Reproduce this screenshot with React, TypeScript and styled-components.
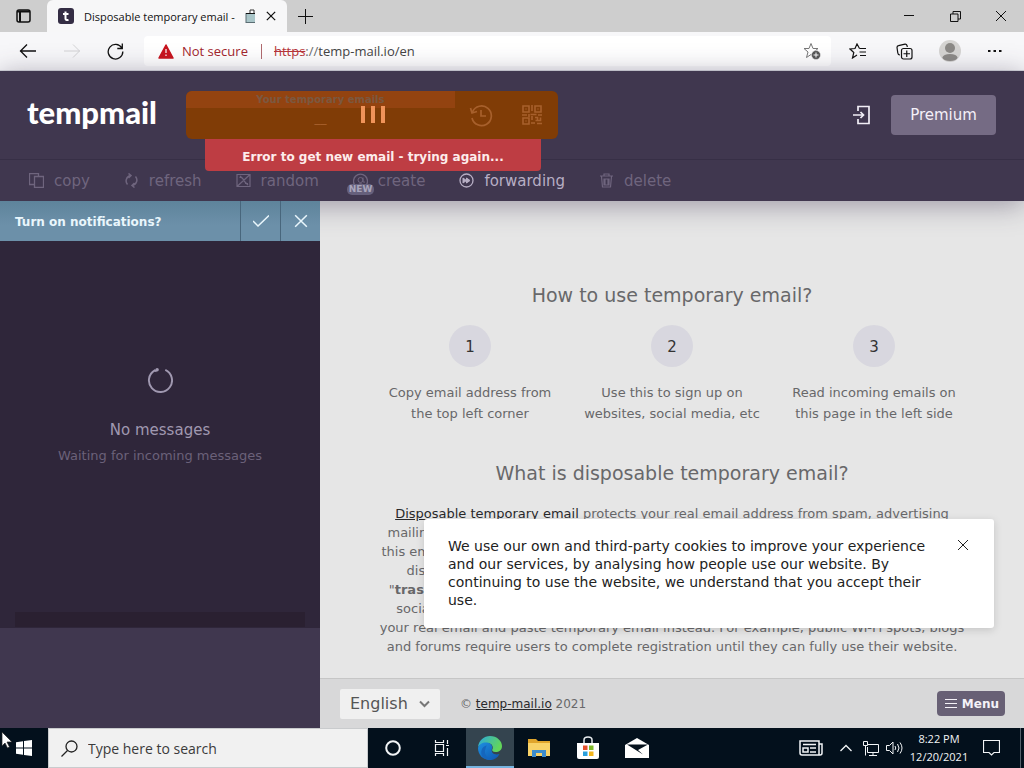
import React from "react";
import styled, { createGlobalStyle, css } from "styled-components";

const Global = createGlobalStyle`
  *, *::before, *::after { box-sizing: border-box; }
  body { margin: 0; font-family: "DejaVu Sans", Verdana, sans-serif; }
  button { font: inherit; color: inherit; background: none; border: 0; padding: 0; margin: 0; }
  svg { display: block; flex: none; }
  h2, p, ol { margin: 0; padding: 0; }
`;

const uiFont = css`
  font-family: "Open Sans", "Segoe UI", sans-serif;
`;

const Desktop = styled.div`
  display: flex;
  flex-direction: column;
  min-height: 100vh;
`;

/* Browser chrome */

const TabStrip = styled.div`
  ${uiFont}
  display: flex;
  align-items: stretch;
  height: 32px;
  background: #cecece;
  color: #111;
`;

const StripButton = styled.button<{ $w: number; $dim?: boolean }>`
  display: flex;
  align-items: center;
  justify-content: center;
  width: ${(p) => p.$w}px;
  color: ${(p) => (p.$dim ? "#d2d2d4" : "#111")};
`;

const Tab = styled.div`
  display: flex;
  align-items: center;
  gap: 10px;
  width: 240px;
  padding: 0 10px 0 11px;
  border-radius: 6px 6px 0 0;
  background: #f7f7f8;
  font-size: 11px;
  white-space: nowrap;
`;

const TabTitle = styled.span`
  display: flex;
  align-items: center;
  gap: 10px;
  flex: 1;
  overflow: hidden;
`;

const Spacer = styled.div`
  flex: 1;
`;

const Toolbar = styled.div`
  ${uiFont}
  display: flex;
  align-items: center;
  height: 39px;
  padding: 0 7px 0 5px;
  background: #f7f7f9;
  border-bottom: 1px solid #d6d8de;
`;

const AddressBar = styled.div`
  display: flex;
  align-items: center;
  flex: 1;
  height: 30px;
  margin: 0 4px 0 7px;
  padding: 0 10px 0 14px;
  border-radius: 4px;
  background: #fff;
  font-size: 13px;
  color: #6b6b6b;
`;

const Insecure = styled.span`
  display: flex;
  align-items: center;
  gap: 8px;
  padding-right: 13px;
  margin-right: 12px;
  border-right: 1px solid #b06a6e;
  line-height: 15px;
  color: #a3262c;
`;

const Scheme = styled.s`
  color: #b8353a;
`;

const AddressInput = styled.input`
  flex: 1;
  min-width: 0;
  padding: 0;
  border: 0;
  outline: 0;
  background: none;
  font: inherit;
  color: #444;
`;

/* Site header */

const Site = styled.div`
  position: relative;
  display: flex;
  flex-direction: column;
  flex: 1;
`;

const Header = styled.header`
  position: relative;
  z-index: 1;
  background: #40374f;
  box-shadow: 0 4px 26px rgba(64, 55, 84, 0.45);
`;

const HeaderTop = styled.div`
  display: flex;
  align-items: center;
  height: 88px;
  padding: 0 28px 0 27px;
`;

const Logo = styled.a`
  width: 159px;
  padding-bottom: 6px;
  font: 900 31px/36px Lato, sans-serif;
  color: #fff;
  text-decoration: none;
`;

const MailBox = styled.div`
  position: relative;
  display: flex;
  width: 372px;
  height: 48px;
  border-radius: 6px;
  background: #803c06;
  color: #a7602c;
`;

const MailAddress = styled.div`
  width: 271px;
  font-size: 12px;
  line-height: 20px;
  text-align: center;
`;

const MailLabel = styled.div`
  height: 17px;
  overflow: hidden;
  border-radius: 6px 0 0 0;
  background: #934310;
  color: #7b5840;
  font-size: 10px;
  font-weight: bold;
  line-height: 18px;
`;

const MailButton = styled.button`
  display: flex;
  align-items: center;
  justify-content: center;
  width: 52px;
`;

const Loader = styled.div`
  position: absolute;
  top: 15px;
  left: 50%;
  display: flex;
  gap: 6px;
  margin-left: -11px;
`;

const LoaderBar = styled.i`
  width: 4px;
  height: 17px;
  background: #f0935a;
`;

const Toast = styled.div`
  position: absolute;
  top: 48px;
  left: 19px;
  right: 17px;
  height: 32px;
  border-radius: 0 0 4px 4px;
  background: #be3d43;
  color: #fdeceb;
  font-size: 12px;
  font-weight: bold;
  line-height: 36px;
  text-align: center;
`;

const Login = styled.button`
  margin-right: 20px;
  color: #f1eef6;
`;

const Premium = styled.button`
  width: 105px;
  height: 40px;
  border-radius: 4px;
  background: #756b84;
  color: #f4f0f8;
  font-size: 15px;
`;

const Actions = styled.nav`
  display: flex;
  height: 42px;
  padding: 0 12px;
  border-top: 1px solid #372f46;
`;

const Action = styled.button<{ $on?: boolean }>`
  position: relative;
  display: flex;
  align-items: center;
  gap: 10px;
  padding: 0 17px;
  font-size: 15px;
  color: ${(p) => (p.$on ? "#b7aec4" : "#6f657e")};
`;

const Badge = styled.span`
  position: absolute;
  left: 11px;
  top: 24px;
  padding: 0 2px;
  border-radius: 5px;
  background: #66607c;
  color: #a9a5bb;
  font-size: 9px;
  font-weight: bold;
  line-height: 11px;
`;

/* Site body */

const Body = styled.div`
  display: flex;
  flex: 1;
`;

const Sidebar = styled.aside`
  position: relative;
  z-index: 2;
  display: flex;
  flex-direction: column;
  width: 320px;
  background: #40374f;
`;

const Notify = styled.div`
  display: flex;
  align-items: stretch;
  height: 40px;
  padding-left: 15px;
  background: linear-gradient(#5e849b, #6c90a9 60%);
  color: #e9f6fc;
  font-size: 12px;
  font-weight: bold;
  line-height: 42px;
`;

const NotifyButton = styled.button`
  display: flex;
  align-items: center;
  justify-content: center;
  width: 40px;
  border-left: 1px solid #48667c;
`;

const Inbox = styled.section`
  display: flex;
  flex-direction: column;
  align-items: center;
  height: 387px;
  padding-top: 126px;
  background: #2f263a;
  color: #a098b0;
  font-size: 15px;
  line-height: 26px;
`;

const InboxTitle = styled.p`
  margin-top: 24px;
`;

const InboxHint = styled.p`
  color: #6b6179;
  font-size: 13px;
`;

const InboxShade = styled.div`
  width: 290px;
  height: 15px;
  margin: auto 0 1px;
  background: #2a2031;
`;

const Main = styled.main`
  display: flex;
  flex-direction: column;
  flex: 1;
  background: #e6e6e6;
  color: #68686a;
  text-align: center;
`;

const Content = styled.div`
  width: 606px;
  max-width: 100%;
  margin: 0 auto;
  padding: 80px 0 20px;
  flex: 1;
`;

const Title = styled.h2`
  font-size: 19px;
  font-weight: normal;
  line-height: 28px;
`;

const Steps = styled.ol`
  display: grid;
  grid-template-columns: repeat(3, 1fr);
  padding: 16px 0 35px;
  list-style: none;
  font-size: 13px;
  line-height: 21px;
`;

const Step = styled.li`
  display: flex;
  flex-direction: column;
  align-items: center;
  gap: 15px;
`;

const StepNumber = styled.span`
  width: 42px;
  height: 42px;
  border-radius: 50%;
  background: #d8d7df;
  color: #333;
  font-size: 15px;
  line-height: 44px;
`;

const About = styled.p`
  padding-top: 17px;
  font-size: 13px;
  line-height: 19px;
  white-space: nowrap;
`;

const TextLink = styled.a`
  color: #29292b;
`;

const Footer = styled.footer`
  display: flex;
  align-items: center;
  height: 50px;
  padding: 0 19px 0 20px;
  border-top: 1px solid #c6c6c6;
  background: #d8d8d9;
  font-size: 12px;
`;

const LanguageWrap = styled.label`
  position: relative;
  display: flex;
  align-items: center;
  margin-right: 20px;
`;

const Language = styled.select`
  appearance: none;
  width: 100px;
  height: 30px;
  padding: 0 10px;
  border: 0;
  border-radius: 2px;
  background: #f0f0f0;
  color: #555;
  font: 16px "DejaVu Sans", sans-serif;
`;

const LanguageArrow = styled.svg`
  position: absolute;
  right: 10px;
  pointer-events: none;
`;

const MenuButton = styled.button`
  display: flex;
  align-items: center;
  gap: 5px;
  height: 25px;
  padding: 0 6px 0 8px;
  border-radius: 4px;
  background: #686075;
  color: #f5f2f8;
  font-size: 12px;
  font-weight: bold;
`;

const Cookie = styled.div`
  position: absolute;
  right: 30px;
  bottom: 100px;
  z-index: 3;
  display: flex;
  align-items: flex-start;
  justify-content: space-between;
  width: 570px;
  height: 109px;
  padding: 18px 24px;
  border-radius: 3px;
  background: #fff;
  box-shadow: 0 2px 8px rgba(0, 0, 0, 0.15);
  color: #222;
  font-size: 14px;
  line-height: 18px;
`;

const CookieText = styled.p`
  width: 484px;
`;

const CookieClose = styled.button`
  padding: 2px 1px;
`;

/* Taskbar */

const Taskbar = styled.footer`
  ${uiFont}
  display: flex;
  align-items: stretch;
  height: 40px;
  background: #03101c;
  color: #f2f4f6;
`;

const Start = styled.button`
  display: flex;
  align-items: center;
  justify-content: center;
  width: 48px;
`;

const SearchBox = styled.label`
  display: flex;
  align-items: center;
  gap: 10px;
  width: 320px;
  padding-left: 12px;
  border: 1px solid #c9cbcd;
  background: #f1f1f1;
  color: #222;
`;

const SearchInput = styled.input`
  flex: 1;
  min-width: 0;
  padding: 0;
  border: 0;
  outline: 0;
  background: none;
  font: inherit;
  font-size: 14px;
  &::placeholder { color: #3b3b3b; opacity: 1; }
`;

const Task = styled.button<{ $active?: boolean }>`
  display: flex;
  align-items: center;
  justify-content: center;
  width: ${(p) => (p.$active ? 48 : 49)}px;
  background: ${(p) => (p.$active ? "#34444f" : "transparent")};
  box-shadow: ${(p) => (p.$active ? "inset 0 -2px #76b4e0" : "none")};
`;

const Tray = styled.button<{ $w: number }>`
  display: flex;
  align-items: center;
  justify-content: center;
  width: ${(p) => p.$w}px;
`;

const Clock = styled.button`
  width: 60px;
  font-size: 11px;
  line-height: 18px;
  text-align: center;
  white-space: nowrap;
`;

const PeekEdge = styled.div`
  width: 4px;
  margin-left: 7px;
  border-left: 1px solid #55616b;
`;

const Pointer = styled.svg`
  position: absolute;
  left: 1px;
  top: 731px;
  z-index: 5;
`;

type IconProps = { w: number; h?: number; box?: string; sw?: number; children: React.ReactNode };

const Icon = ({ w, h, box, sw = 1, children }: IconProps) => (
  <svg
    width={w}
    height={h ?? w}
    viewBox={box ?? `0 0 ${w} ${h ?? w}`}
    fill="none"
    stroke="currentColor"
    strokeWidth={sw}
    aria-hidden="true"
  >
    {children}
  </svg>
);

const Cross = ({ size, sw = 1 }: { size: number; sw?: number }) => (
  <Icon w={size} box="0 0 12 12" sw={sw}>
    <path d="M1 1l10 10M11 1L1 11" />
  </Icon>
);

const star = "M8 1l2 5h5l-4 3.500 1.500 5.500L8 12l-4.500 3L5 9.500 1 6h5z";

const actions = [
  {
    name: "copy",
    icon: <path d="M5.500 3.500h9v11h-9zM5.500 11.500h-5v-11h9v3" strokeWidth="1.300" />,
  },
  {
    name: "refresh",
    icon: <path d="M3.500 11.500A5.500 5.500 0 0 1 6.500 2.500M4.500 0.500l2.500 2-2.500 2.500M11.500 3.500A5.500 5.500 0 0 1 8.500 12.500M10.500 14.500l-2.500-2 2.500-2.500" strokeWidth="1.500" />,
  },
  {
    name: "random",
    icon: <path d="M1 1.500h13v12H1zM1 13.500l13-12M3.500 4.500h3M9 10.500h3M4 3l4 4M8 8l4 4" strokeWidth="1.200" />,
  },
  {
    name: "create",
    badge: "NEW",
    icon: (
      <>
        <path d="M2 12.500A7 7 0 1 1 13 12.500" strokeWidth="1.300" />
        <circle cx="7.500" cy="7" r="2.500" />
        <path d="M10 4.500V8q0 2 2 1M4 12q3.500-3 7 0" />
      </>
    ),
  },
  {
    name: "forwarding",
    on: true,
    icon: (
      <>
        <circle cx="7.500" cy="7.500" r="6.500" strokeWidth="1.300" />
        <path d="M4 5l3.500 2.500L4 10zM7.500 5L11 7.500 7.500 10z" fill="currentColor" />
      </>
    ),
  },
  {
    name: "delete",
    icon: <path d="M1 3h13M5 3V1h5v2M2.500 3.500l1 10.500h8l1-10.500M6 6v5.500M9 6v5.500M5 6h5v6H5z" strokeWidth="1.200" />,
  },
];

const steps = [
  ["Copy email address from", "the top left corner"],
  ["Use this to sign up on", "websites, social media, etc"],
  ["Read incoming emails on", "this page in the left side"],
];

const Browser = () => (
  <>
    <TabStrip>
      <StripButton $w={47} aria-label="Tab actions">
        <Icon w={15} h={14} sw={1.5}>
          <rect x="1" y="1" width="13" height="12" rx="2" />
          <path d="M1 2.500h13M4 3v10" strokeWidth="2" />
        </Icon>
      </StripButton>
      <Tab>
        <svg width="16" height="16" viewBox="0 0 16 16" aria-hidden="true">
          <rect width="16" height="16" rx="3" fill="#342d44" />
          <path d="M7.500 3.500v7q0 2 3 1.500M5 6h5.500" fill="none" stroke="#fff" strokeWidth="2" />
        </svg>
        <TabTitle>
          Disposable temporary email -
          <svg width="14" height="14" viewBox="0 0 14 14" aria-hidden="true">
            <path d="M5 5V1h4v4" fill="#fff" stroke="#333" />
            <rect x="1" y="4.500" width="12" height="9" fill="#a9c5c8" stroke="#5b6d73" />
            <path d="M1 4.500h12" stroke="#111" />
          </svg>
        </TabTitle>
        <StripButton $w={12} aria-label="Close tab"><Cross size={10} sw={1.5} /></StripButton>
      </Tab>
      <StripButton $w={36} aria-label="New tab">
        <Icon w={15}><path d="M7.500 0v15M0 7.500h15" /></Icon>
      </StripButton>
      <Spacer />
      <StripButton $w={46} aria-label="Minimize"><Icon w={10}><path d="M0 4.500h10" /></Icon></StripButton>
      <StripButton $w={46} aria-label="Restore">
        <Icon w={11}><path d="M.5 3h7.500v7.500H.5zM3 3V.5h7.500V8H8" /></Icon>
      </StripButton>
      <StripButton $w={46} aria-label="Close"><Cross size={12} /></StripButton>
    </TabStrip>
    <Toolbar>
      <StripButton $w={45} aria-label="Back"><Icon w={17} h={14} sw={1.3}><path d="M17 7H1M8 .5L1.500 7 8 13.500" /></Icon></StripButton>
      <StripButton $w={44} $dim aria-label="Forward"><Icon w={17} h={14}><path d="M0 7h16M9 .5L15.500 7 9 13.500" /></Icon></StripButton>
      <StripButton $w={43} aria-label="Reload">
        <Icon w={17} sw={1.300}><path d="M14.800 5A7.300 7.300 0 1 0 15.800 8.500M15.300.5v5H10.300" /></Icon>
      </StripButton>
      <AddressBar>
        <Insecure>
          <svg width="16" height="15" viewBox="0 0 16 15" aria-hidden="true">
            <path d="M8 1L15 14H1z" fill="#c8141e" stroke="#c8141e" strokeLinejoin="round" strokeWidth="1.500" />
            <path d="M8 5v4M8 10.500v1.500" stroke="#fff" strokeWidth="1.200" />
          </svg>
          Not secure
        </Insecure>
        <Scheme>https</Scheme>://
        <AddressInput aria-label="Address" defaultValue="temp-mail.io/en" />
        <Icon w={18} box="0 0 18 17">
          <path d={star} stroke="#777" />
          <circle cx="13" cy="12.500" r="4.500" fill="#555" stroke="#fff" strokeWidth=".5" />
          <path d="M13 10v5M10.500 12.500h5" stroke="#fff" />
        </Icon>
      </AddressBar>
      <StripButton $w={46} aria-label="Favorites">
        <Icon w={18} h={16} sw={1.200}>
          <path d="M10.500 5.500L8 1 6 5.500 1 6l3.800 3.500L3.500 15 8 12M10.500 5.500H17M10.500 9H17M11 12.500h6" />
        </Icon>
      </StripButton>
      <StripButton $w={46} aria-label="Collections">
        <Icon w={17} sw={1.200}>
          <path d="M4 12Q2 12 1.800 10L1 4.500Q1 3 2.500 2.700L9 1.200q1.500-.2 2 1.300l.3 1.500" />
          <rect x="5.500" y="5.500" width="10.500" height="10.500" rx="2" />
          <path d="M10.750 7.500v6.500M7.500 10.750H14" />
        </Icon>
      </StripButton>
      <StripButton $w={46} aria-label="Profile">
        <svg width="22" height="22" viewBox="0 0 22 22" aria-hidden="true">
          <circle cx="11" cy="11" r="11" fill="#d5d4d2" />
          <circle cx="11" cy="8" r="5" fill="#8b8986" />
          <ellipse cx="11" cy="17.500" rx="7.500" ry="3.500" fill="#8b8986" />
        </svg>
      </StripButton>
      <StripButton $w={44} aria-label="More">
        <Icon w={14} h={4}><path d="M0 2h2.500M5.500 2h2.500M11 2h2.500" strokeWidth="2" /></Icon>
      </StripButton>
    </Toolbar>
  </>
);

const SiteHeader = () => (
  <Header>
    <HeaderTop>
      <Logo href="#">tempmail</Logo>
      <MailBox>
        <MailAddress>
          <MailLabel>Your temporary emails</MailLabel>
          __
        </MailAddress>
        <MailButton aria-label="History">
          <Icon w={24} box="0 0 24 24" sw={1.700}>
            <path d="M3.500 9A9.800 9.800 0 1 1 3 15M1.500 5l1.500 5 5-1.500M12 7v6h5" />
          </Icon>
        </MailButton>
        <MailButton aria-label="QR code">
          <Icon w={20} box="0 0 20 20" sw={1.600}>
            <path d="M1 1h6v6H1zM13 1h6v6h-6zM1 13h6v6H1zM10 0v6M8.500 9.500h6M0 10h5M16 10h4M10 11v4M13 12.500h2.500v3M18.500 12.500v3h-5M9 18h4M15 18.500h5M3.500 4h1M15.500 4h1M3.500 16h1M7 9v3" />
          </Icon>
        </MailButton>
        <Loader aria-label="Loading"><LoaderBar /><LoaderBar /><LoaderBar /></Loader>
        <Toast role="alert">Error to get new email - trying again...</Toast>
      </MailBox>
      <Spacer />
      <Login aria-label="Log in">
        <Icon w={18} h={20} sw={1.700}>
          <path d="M5 6V1.500h11v17H5V14M0 10h10.500M7.500 7l3 3-3 3" />
        </Icon>
      </Login>
      <Premium>Premium</Premium>
    </HeaderTop>
    <Actions>
      {actions.map((a) => (
        <Action key={a.name} $on={a.on}>
          <Icon w={15}>{a.icon}</Icon>
          {a.name}
          {a.badge && <Badge>{a.badge}</Badge>}
        </Action>
      ))}
    </Actions>
  </Header>
);

const SiteSidebar = () => (
  <Sidebar>
    <Notify>
      Turn on notifications?
      <Spacer />
      <NotifyButton aria-label="Yes"><Icon w={16} h={12} sw={1.500}><path d="M0 6l5 5L16 .5" /></Icon></NotifyButton>
      <NotifyButton aria-label="No"><Cross size={14} sw={1.300} /></NotifyButton>
    </Notify>
    <Inbox>
      <Icon w={26} box="0 0 27 27" sw={2}>
        <path d="M19 3A12 12 0 1 1 8 3.500l2 1" />
        <circle cx="10.500" cy="2.800" r="1.800" fill="currentColor" stroke="none" />
      </Icon>
      <InboxTitle>No messages</InboxTitle>
      <InboxHint>Waiting for incoming messages</InboxHint>
      <InboxShade />
    </Inbox>
  </Sidebar>
);

const SiteMain = () => (
  <Main>
    <Content>
      <Title>How to use temporary email?</Title>
      <Steps>
        {steps.map(([first, second], i) => (
          <Step key={first}>
            <StepNumber>{i + 1}</StepNumber>
            <span>{first}<br />{second}</span>
          </Step>
        ))}
      </Steps>
      <Title>What is disposable temporary email?</Title>
      <About>
        <TextLink href="#">Disposable temporary email</TextLink> protects your real email address from spam, advertising<br />
        mailings, malwares. It's anonymous and free. You can make custom address or just use<br />
        this email randomly generated for you. Temporary email is also known by names such as<br />
        disposable mail, "tempmail", "throwaway email", "fake mail", "10 minute mail" or<br />
        "<b>trash mail</b>". Many forums, public hotspots, online stores, websites and other kinds of<br />
        social media websites ask you to sign up before using them. You do not need to give<br />
        your real email and paste temporary email instead. For example, public Wi-Fi spots, blogs<br />
        and forums require users to complete registration until they can fully use their website.
      </About>
    </Content>
    <Footer>
      <LanguageWrap>
        <Language aria-label="Language"><option>English</option></Language>
        <LanguageArrow width="11" height="8" viewBox="0 0 11 8" fill="none" stroke="#777" strokeWidth="2">
          <path d="M1 1.500l4.500 4.500L10 1.500" />
        </LanguageArrow>
      </LanguageWrap>
      <span>© <TextLink href="#">temp-mail.io</TextLink> 2021</span>
      <Spacer />
      <MenuButton><Icon w={12} h={11}><path d="M0 1.500h12M0 5.500h12M0 9.500h12" /></Icon>Menu</MenuButton>
    </Footer>
  </Main>
);

const WindowsTaskbar = () => (
  <Taskbar>
    <Start aria-label="Start">
      <svg width="16" height="16" viewBox="0 0 16 16" fill="#fff" aria-hidden="true">
        <path d="M0 2.300L7 1.300V7.500H0zM8 1.100L16 0v7.500H8zM0 8.500h7v6.200L0 13.700zM8 8.500h8V16L8 14.900z" />
      </svg>
    </Start>
    <SearchBox>
      <Icon w={17} sw={1.300}><circle cx="10.500" cy="6.500" r="5.500" /><path d="M6.500 10.500L.5 16.500" /></Icon>
      <SearchInput aria-label="Search" placeholder="Type here to search" />
    </SearchBox>
    <Task aria-label="Cortana"><Icon w={16} sw={2}><circle cx="8" cy="8" r="6.800" /></Icon></Task>
    <Task aria-label="Task view">
      <Icon w={16}><path d="M1.500 0v2.500h8V0M1.500 4.500h8v7h-8zM1.500 16v-2.500h8V16M13.500 0v4M13.500 8v8M12 5.500h3" strokeWidth="1.200" /></Icon>
    </Task>
    <Task $active aria-label="Edge">
      <svg width="24" height="24" viewBox="0 0 24 24" aria-hidden="true">
        <defs>
          <linearGradient id="edgeTop" x1="0" y1="0" x2="1" y2=".4">
            <stop offset="0" stopColor="#2aa8e0" /><stop offset="1" stopColor="#62d65a" />
          </linearGradient>
          <linearGradient id="edgeLow" x1="0" y1="0" x2="1" y2="1">
            <stop offset="0" stopColor="#1d8fe0" /><stop offset="1" stopColor="#0f55b0" />
          </linearGradient>
        </defs>
        <path d="M0 11C1 4 6 0 12 0c7 0 12 5 12 10 0 4-3 6-6.500 6-3 0-4-1.500-3-3C15.500 11 14 7 9.500 7 5 7 1.500 9 0 11z" fill="url(#edgeTop)" />
        <path d="M0 12C1 8 5 6 9 6.500c4 .5 6 3.500 5 6-1.500 4 2 7 7.500 5.500C19.500 22 16 24 12 24 5 24 0 19 0 12z" fill="url(#edgeLow)" />
        <path d="M7.500 13c-2 4 1 9.500 7 10.500-7 1.500-12.500-3-11-9C4 11.500 6.500 10 9 9.500 8 10.500 7.500 12 7.500 13z" fill="#1566bd" />
      </svg>
    </Task>
    <Task aria-label="File Explorer">
      <svg width="22" height="18" viewBox="0 0 22 18" aria-hidden="true">
        <path d="M0 0h8l2 2h12v15H0z" fill="#e0a52c" /><path d="M0 4h22v13H0z" fill="#f8d268" />
        <path d="M4 18v-7h14v7h-4v-4H8v4z" fill="#3d8ccc" />
      </svg>
    </Task>
    <Task aria-label="Store">
      <svg width="24" height="24" viewBox="0 0 24 24" aria-hidden="true">
        <path d="M8 7V4q0-3 4-3t4 3v3" fill="none" stroke="#e8ecef" strokeWidth="1.500" />
        <path d="M1 7h22v14q0 2-2 2H3q-2 0-2-2z" fill="#fff" />
        <path d="M7 9.500h4.500V14H7z" fill="#e5502d" /><path d="M13 9.500h4.500V14H13z" fill="#7db928" />
        <path d="M7 15.500h4.500V20H7z" fill="#2a9fdc" /><path d="M13 15.500h4.500V20H13z" fill="#f3b51c" />
      </svg>
    </Task>
    <Task aria-label="Mail">
      <svg width="24" height="20" viewBox="0 0 24 20" aria-hidden="true">
        <path d="M0 7L12 0l12 7v13H0z" fill="#fff" /><path d="M2 6.500h21L13 12l5 4.500z" fill="#07131e" />
      </svg>
    </Task>
    <Spacer />
    <Tray $w={36} aria-label="News">
      <Icon w={24} h={16} sw={1.500}>
        <path d="M1 1h19v14H3q-2 0-2-2zM20 4h3v9q0 2-2 2h-2M4 4.500h13M4 8h5v4H4zM11 8h6M11 12h6" />
      </Icon>
    </Tray>
    <Tray $w={34} aria-label="Show hidden icons"><Icon w={12} h={8} sw={1.300}><path d="M.5 7L6 1.500 11.500 7" /></Icon></Tray>
    <Tray $w={16} aria-label="Network">
      <Icon w={16} h={15}><path d="M5 3.500h10.500v8H4.500V6M10 12v2.500M6 14.500h8M.5.5h4v4h-4zM2.500 5v9.500" /></Icon>
    </Tray>
    <Tray $w={30} aria-label="Volume">
      <Icon w={17} h={14}><path d="M.5 4.500h3L7 1v12L3.500 9.500h-3zM9 5q1.500 2 0 4M11.500 3q3 4 0 8M14 1.500q4 5.500 0 11" /></Icon>
    </Tray>
    <Clock>8:22 PM<br />12/20/2021</Clock>
    <Tray $w={44} aria-label="Notifications">
      <Icon w={17} h={16}><path d="M.5.5h16v12H11L8.500 15 6 12.500H.5z" strokeWidth="1.200" /></Icon>
    </Tray>
    <PeekEdge />
  </Taskbar>
);

export default function App() {
  return (
    <Desktop>
      <Global />
      <Browser />
      <Site>
        <SiteHeader />
        <Body>
          <SiteSidebar />
          <SiteMain />
        </Body>
        <Cookie role="dialog" aria-label="Cookies">
          <CookieText>
            We use our own and third-party cookies to improve your experience and our services, by
            analysing how people use our website. By continuing to use the website, we understand
            that you accept their use.
          </CookieText>
          <CookieClose aria-label="Close"><Cross size={12} /></CookieClose>
        </Cookie>
      </Site>
      <WindowsTaskbar />
      <Pointer width="12" height="18" viewBox="0 0 12 18" aria-hidden="true">
        <path d="M1 1v14l3-3 2.500 5 2-1L6 11h5z" fill="#fff" stroke="#222" strokeWidth=".7" />
      </Pointer>
    </Desktop>
  );
}
